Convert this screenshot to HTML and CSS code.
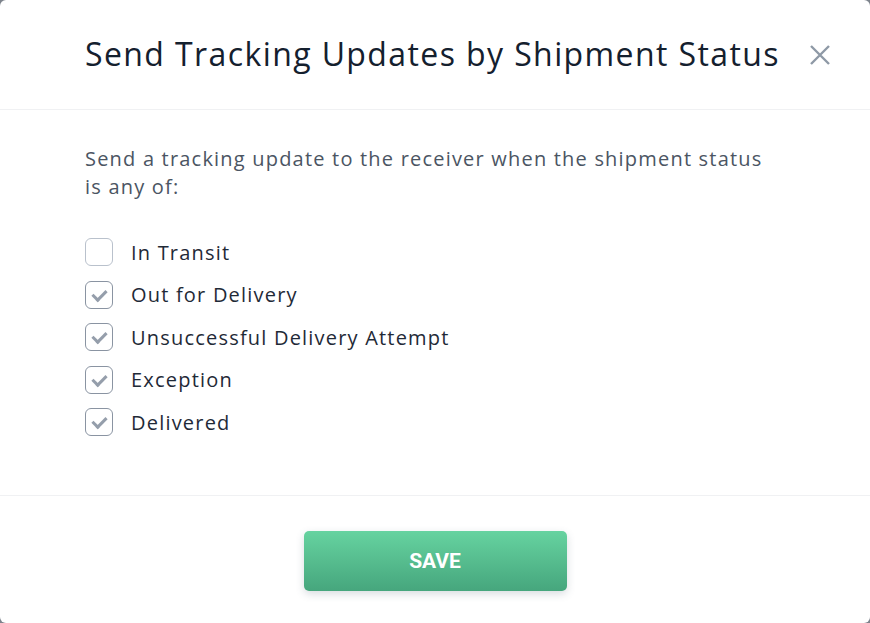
FILE: index.html
```html
<!DOCTYPE html>
<html lang="en">
<head>
    <meta charset="UTF-8">
    <meta name="viewport" content="width=device-width, initial-scale=1.0">
    <title>Send Tracking Updates</title>
    <link rel="stylesheet" href="styles.css">
</head>
<body>
    <div class="modal">
        <div class="modal-header">
            <h1>Send Tracking Updates by Shipment Status</h1>
            <button type="button" class="close-btn" title="Close">
                <svg width="24" height="24" viewBox="0 0 24 24">
                    <path d="M3 3 L21 21 M21 3 L3 21" stroke="#8e99a6" stroke-width="2.4" fill="none"/>
                </svg>
            </button>
        </div>

        <div class="modal-body">
            <p class="intro">Send a tracking update to the receiver when the shipment status is any of:</p>
            <div class="status-list">
                <label class="status-item"><input type="checkbox" name="status" value="in_transit"><span class="box"></span> In Transit</label>
                <label class="status-item"><input type="checkbox" name="status" value="out_for_delivery" checked><span class="box"></span> Out for Delivery</label>
                <label class="status-item"><input type="checkbox" name="status" value="attempt_fail" checked><span class="box"></span> Unsuccessful Delivery Attempt</label>
                <label class="status-item"><input type="checkbox" name="status" value="exception" checked><span class="box"></span> Exception</label>
                <label class="status-item"><input type="checkbox" name="status" value="delivered" checked><span class="box"></span> Delivered</label>
            </div>
        </div>

        <div class="modal-footer">
            <button type="button" class="btn-save">SAVE</button>
        </div>
    </div>
</body>
</html>
```

FILE: styles.css
```css
* {
    margin: 0;
    padding: 0;
    box-sizing: border-box;
}
body {
    font-family: "Open Sans", "Liberation Sans", sans-serif;
    background: #7d838c;
    width: 870px;
    height: 623px;
    overflow: hidden;
}
.modal {
    width: 870px;
    height: 623px;
    background: #fff;
    border-radius: 6px;
    display: flex;
    flex-direction: column;
}
.modal-header {
    height: 110px;
    display: flex;
    align-items: center;
    justify-content: space-between;
    padding: 0 38px 0 85px;
    border-bottom: 1px solid #f0f1f3;
}
.modal-header h1 {
    font-size: 32px;
    font-weight: 400;
    color: #14202e;
    letter-spacing: 1.4px;
    padding-bottom: 2px;
    white-space: nowrap;
}
.close-btn {
    border: none;
    background: none;
    cursor: pointer;
    display: flex;
}
.modal-body {
    height: 386px;
    padding: 35px 85px 0;
    border-bottom: 1px solid #f0f1f3;
}
.intro {
    font-size: 20px;
    line-height: 28px;
    color: #4b5563;
    letter-spacing: 1.2px;
    max-width: 690px;
    margin-bottom: 37px;
}
.status-list {
    display: flex;
    flex-direction: column;
    gap: 14.5px;
}
.status-item {
    display: flex;
    align-items: center;
    gap: 18px;
    font-size: 20px;
    color: #1f2a37;
    letter-spacing: 1.2px;
    height: 28px;
    cursor: pointer;
}
.status-item input {
    display: none;
}
.box {
    width: 28px;
    height: 28px;
    border: 1px solid #b9c1cc;
    border-radius: 6px;
    position: relative;
}
.status-item input:checked + .box {
    border-color: #8a94a2;
}
.status-item input:checked + .box::after {
    content: "";
    position: absolute;
    left: 9px;
    top: 5px;
    width: 6px;
    height: 11px;
    border: solid #959eab;
    border-width: 0 3px 3px 0;
    transform: rotate(45deg);
}
.modal-footer {
    flex: 1;
    display: flex;
    justify-content: center;
    padding-top: 35px;
}
.btn-save {
    width: 263px;
    height: 60px;
    border: none;
    border-radius: 5px;
    background: linear-gradient(#66d3a0, #46a67d);
    color: #fff;
    font-family: Roboto, "Liberation Sans", sans-serif;
    font-weight: 700;
    font-size: 21px;
    box-shadow: 0 3px 8px rgba(60, 80, 100, 0.2);
    cursor: pointer;
}
```
